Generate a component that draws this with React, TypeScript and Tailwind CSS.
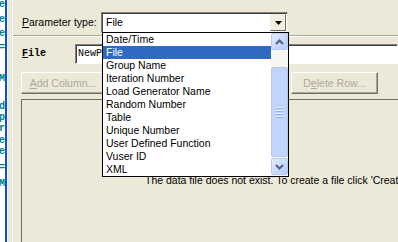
import React from 'react';

const items = [
  'Date/Time',
  'File',
  'Group Name',
  'Iteration Number',
  'Load Generator Name',
  'Random Number',
  'Table',
  'Unique Number',
  'User Defined Function',
  'Vuser ID',
  'XML',
];

// right edge of the code editor window behind the dialog
const codeLines = [
  { t: 'value', h: 'h-[15px] -mt-[3px]' },
  { t: 'type', h: 'h-[15px]' },
  { t: 'file', h: 'h-[13px]' },
  { t: 'x=', h: 'h-[16px]' },
  { t: 'ITEM', h: 'h-[45px]' },
  { t: 'end', h: 'h-[11px]' },
  { t: 'step', h: 'h-[11px]' },
  { t: 'for', h: 'h-[12px]' },
  { t: 'name', h: 'h-[11px]' },
  { t: 'table', h: 'h-[12px]' },
  { t: 'y=', h: 'h-[20px]' },
  { t: 'ITEM', h: 'h-[12px]' },
];

const Chevron = ({ up }: { up?: boolean }) => (
  <svg width="9" height="6" viewBox="0 0 9 6">
    <polyline
      points={up ? '1,5 4.5,1.5 8,5' : '1,1 4.5,4.5 8,1'}
      fill="none"
      stroke="#4D6185"
      strokeWidth="2"
    />
  </svg>
);

const ScrollButton = ({ up }: { up?: boolean }) => (
  <div className="h-[17px] w-full rounded-[2px] border border-[#B9CCF5] bg-gradient-to-br from-[#E3EBFE] to-[#B7CBF8] flex items-center justify-center">
    <Chevron up={up} />
  </div>
);

const Button = ({ children, w }: { children: React.ReactNode; w: string }) => (
  <div className={`h-[22px] ${w} border border-t-white border-l-white border-r-[#716F64] border-b-[#716F64] shadow-[inset_-1px_-1px_0_#ACA899] flex items-center justify-center text-[#ACA899] shrink-0`}>
    {children}
  </div>
);

export default function App() {
  return (
    <div className="w-[398px] h-[242px] overflow-hidden flex bg-[#ECE9D8] relative font-['Liberation_Sans',Arial,sans-serif] text-[10.5px] text-black leading-none">
      <div className="w-[5px] h-full bg-white overflow-hidden flex flex-col shrink-0">
        {codeLines.map((l, i) => (
          <div key={i} className={`${l.h} flex items-center justify-end shrink-0 whitespace-nowrap font-['Liberation_Mono',monospace] text-[10px] font-bold text-[#008080]`}>
            <span>{l.t}</span>
          </div>
        ))}
      </div>
      <div className="w-[2px] h-full bg-[#0A4EE4] shrink-0" />
      <div className="w-[1px] h-full bg-[#F7F6F1] shrink-0" />
      <div className="w-[4px] h-full shrink-0" />

      <div className="flex-1 flex flex-col border-l border-white min-w-0">
        {/* parameter type row */}
        <div className="h-[36px] shrink-0 flex items-start pl-[9px] pt-[12px] border-b border-[#ACA899]">
          <div className="h-[21px] w-[79px] flex items-center">
            <span><span className="underline">P</span>arameter type:</span>
          </div>
          <div className="h-[21px] w-[187px] bg-white border border-t-[#808080] border-l-[#808080] border-r-[#F1EFE2] border-b-[#F1EFE2] shadow-[inset_1px_1px_0_#404040] flex items-center">
            <span className="pl-[4px] flex-1">File</span>
            <div className="w-[16px] h-[17px] mr-[1px] bg-[#F1EFE2] border border-t-[#F1EFE2] border-l-[#F1EFE2] border-r-[#716F64] border-b-[#716F64] flex items-center justify-center">
              <svg width="7" height="4" viewBox="0 0 7 4">
                <polygon points="0,0 7,0 3.5,4" fill="#000" />
              </svg>
            </div>
          </div>
        </div>

        {/* lower panel */}
        <div className="flex-1 flex flex-col border-t border-white pl-[8px]">
          <div className="h-[20px] mt-[7px] flex items-center">
            <span className="w-[54px] pl-[1px] font-['Liberation_Mono',monospace] text-[10px] font-bold">
              <span className="underline">F</span>ile
            </span>
            <div className="flex-1 h-[20px] bg-white border border-t-[#808080] border-l-[#808080] border-r-white border-b-white shadow-[inset_1px_1px_0_#404040] flex items-center pl-[2px] font-['Liberation_Mono',monospace] text-[10px] whitespace-nowrap overflow-hidden">
              NewParam.dat
            </div>
          </div>

          <div className="flex mt-[8px] pr-[20px]">
            <Button w="w-[84px]">
              <span><span className="underline">A</span>dd Column...</span>
            </Button>
            <div className="ml-auto">
              <Button w="w-[87px]">
                <span>D<span className="underline">e</span>lete Row...</span>
              </Button>
            </div>
          </div>

          <div className="flex-1 mt-[5px] border-t border-l border-[#716F64] pt-[75px] pl-[123px] whitespace-nowrap">
            The data file does not exist. To create a file click 'Create Data File'.
          </div>
        </div>
      </div>

      {/* open combobox list */}
      <div className="absolute left-[102px] top-[32px] w-[187px] border border-black bg-white flex">
        <div className="flex-1 flex flex-col">
          {items.map((it) => (
            <div
              key={it}
              className={`h-[13px] flex items-center pl-[3px] whitespace-nowrap ${it === 'File' ? 'bg-[#316AC5] text-white' : ''}`}
            >
              {it}
            </div>
          ))}
        </div>
        <div className="w-[17px] flex flex-col bg-[#F7F6F1]">
          <ScrollButton up />
          <div className="h-[17px]" />
          <div className="h-[90px] rounded-[2px] border border-[#B5C8F3] bg-[#C3D4FC] flex flex-col items-center justify-center gap-[1px]">
            {[0, 1, 2, 3].map((i) => (
              <div key={i} className="w-[7px] h-[1px] bg-[#EEF4FE] border-b border-[#8CB0F8] box-content" />
            ))}
          </div>
          <div className="h-[1px]" />
          <ScrollButton />
          <div className="h-[1px]" />
        </div>
      </div>
    </div>
  );
}
